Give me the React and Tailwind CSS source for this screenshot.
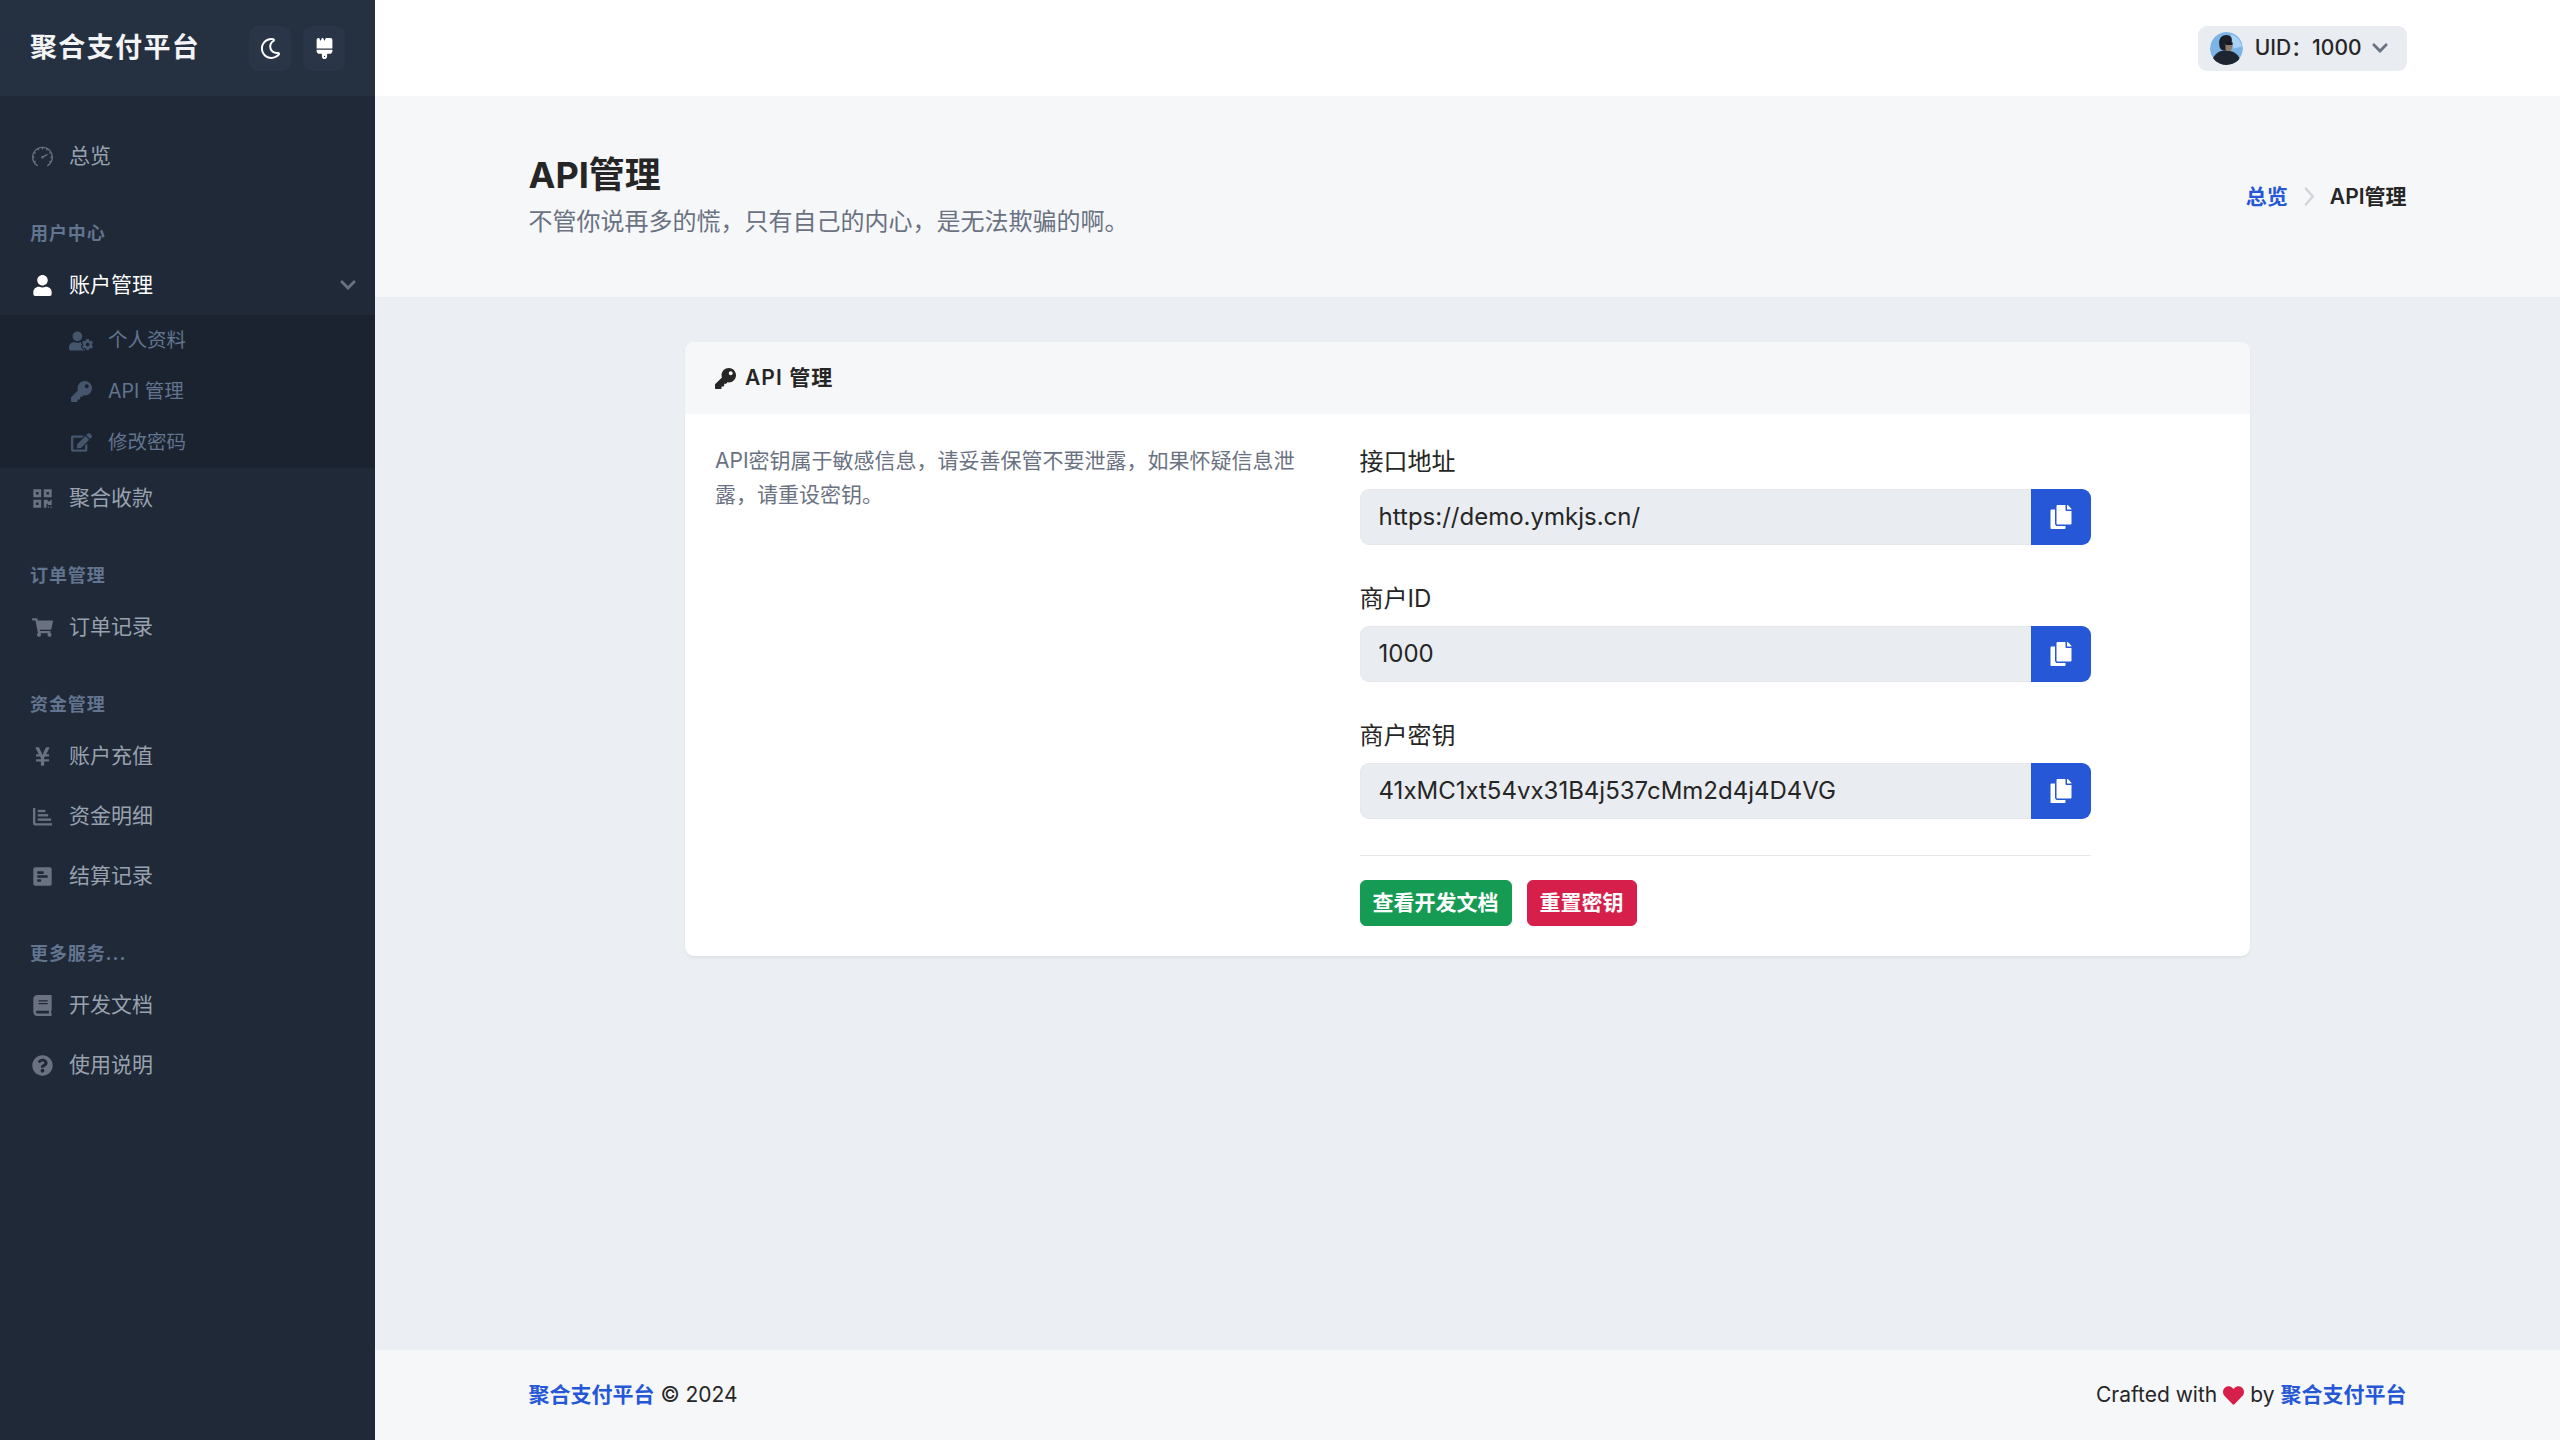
import React from "react";
import {
  FaRegMoon,
  FaUser,
  FaUserCog,
  FaKey,
  FaEdit,
  FaQrcode,
  FaShoppingCart,
  FaYenSign,
  FaPollH,
  FaBook,
  FaQuestionCircle,
  FaCopy,
  FaHeart,
  FaChevronDown,
} from "react-icons/fa";
import { FaBrush } from "react-icons/fa6";
import { SlSpeedometer } from "react-icons/sl";

function BarsIcon() {
  return (
    <svg viewBox="0 0 22 20" width="1em" height="1em" fill="currentColor">
      <path d="M1 1h2.5v15c0 .6.4 1 1 1H21v2.5H3.5A2.5 2.5 0 0 1 1 17z" />
      <rect x="6" y="3" width="8" height="2.5" />
      <rect x="6" y="7.5" width="11" height="2.5" />
      <rect x="6" y="12" width="14" height="2.5" />
    </svg>
  );
}

const navGroups = [
  {
    title: "用户中心",
    items: [
      {
        label: "账户管理",
        icon: FaUser,
        open: true,
        children: [
          { label: "个人资料", icon: FaUserCog, size: "text-base" },
          { label: "API 管理", icon: FaKey, size: "text-sm" },
          { label: "修改密码", icon: FaEdit, size: "text-sm" },
        ],
      },
      { label: "聚合收款", icon: FaQrcode },
    ],
  },
  { title: "订单管理", items: [{ label: "订单记录", icon: FaShoppingCart }] },
  {
    title: "资金管理",
    items: [
      { label: "账户充值", icon: FaYenSign },
      { label: "资金明细", icon: BarsIcon },
      { label: "结算记录", icon: FaPollH },
    ],
  },
  {
    title: "更多服务...",
    items: [
      { label: "开发文档", icon: FaBook },
      { label: "使用说明", icon: FaQuestionCircle },
    ],
  },
];

const fields = [
  { label: "接口地址", value: "https://demo.ymkjs.cn/" },
  { label: "商户ID", value: "1000" },
  { label: "商户密钥", value: "41xMC1xt54vx31B4j537cMm2d4j4D4VG" },
];

function NavItem({ item }) {
  const Icon = item.icon;
  return (
    <li>
      <div className={`flex items-center gap-2.5 h-10 pl-5 pr-3 text-sm ${item.open ? "text-white" : "text-gray-400"}`}>
        <span className={`w-4 flex justify-center text-sm ${item.open ? "text-white" : "text-gray-500"}`}>
          <Icon />
        </span>
        <span className="flex-1">{item.label}</span>
        {item.children && <FaChevronDown className="text-xs text-gray-500" />}
      </div>
      {item.children && (
        <ul className="bg-[#1b2330]">
          {item.children.map((child) => {
            const ChildIcon = child.icon;
            return (
              <li key={child.label} className="flex items-center gap-2.5 h-8.5 pl-11.5 text-[13px] text-slate-500">
                <span className={`w-4 flex justify-center text-slate-600 ${child.size}`}>
                  <ChildIcon />
                </span>
                {child.label}
              </li>
            );
          })}
        </ul>
      )}
    </li>
  );
}

function Sidebar() {
  return (
    <aside className="w-[250px] shrink-0 h-full bg-[#1f2937]">
      <div className="h-16 flex items-center justify-between px-5 bg-[#253041]">
        <span className="text-lg font-bold tracking-wider text-gray-100">聚合支付平台</span>
        <div className="flex gap-2">
          <button className="w-7 h-7.5 flex items-center justify-center rounded-md bg-[#2a3547] text-sm text-white">
            <FaRegMoon />
          </button>
          <button className="w-7 h-7.5 flex items-center justify-center rounded-md bg-[#2a3547] text-sm text-white">
            <FaBrush />
          </button>
        </div>
      </div>
      <nav className="pt-5">
        <div className="flex items-center gap-2.5 h-10 px-5 text-sm text-gray-400">
          <span className="w-4 flex justify-center text-sm text-gray-500">
            <SlSpeedometer />
          </span>
          总览
        </div>
        {navGroups.map((group) => (
          <div key={group.title}>
            <div className="pt-6 pb-1.5 px-5 text-xs font-bold tracking-wider text-slate-500">{group.title}</div>
            <ul>
              {group.items.map((item) => (
                <NavItem key={item.label} item={item} />
              ))}
            </ul>
          </div>
        ))}
      </nav>
    </aside>
  );
}

function Topbar() {
  return (
    <header className="h-16 shrink-0 bg-white">
      <div className="max-w-7xl h-full mx-auto px-3.5 flex items-center justify-end">
        <button className="h-7.5 flex items-center gap-2 pl-2 pr-3 rounded-md bg-[#e9ecf1] text-sm font-medium text-neutral-800">
          <svg viewBox="0 0 32 32" className="w-5.5 h-5.5 rounded-full">
            <circle cx="16" cy="16" r="16" fill="#7db4e6" />
            <path d="M20 2c6 2 10 7 11 12l-8 2z" fill="#a9d2f3" />
            <path d="M2 28c2-7 7-10 13-10s12 2 14 9c-3 3-8 5-13 5S5 31 2 28z" fill="#1e2530" />
            <path d="M9 12c-1-6 3-9 7-9s6 3 5 7l-2 8h-6c-3-1-4-3-4-6z" fill="#1a1f28" />
            <path d="M15 11h7l-1 6c-2 2-5 2-6 0z" fill="#8f7a6c" />
            <rect x="15" y="10" width="7" height="2.5" rx="1" fill="#14181f" />
          </svg>
          <span>UID：1000</span>
          <FaChevronDown className="text-xs text-gray-500 -ml-0.5" />
        </button>
      </div>
    </header>
  );
}

function Hero() {
  return (
    <section className="shrink-0 bg-[#f6f7f9]">
      <div className="max-w-7xl mx-auto px-3.5 py-9.5 flex items-center justify-between">
        <div>
          <h1 className="text-2xl leading-7.5 font-bold text-neutral-800">API管理</h1>
          <p className="mt-1 text-base text-gray-500">不管你说再多的慌，只有自己的内心，是无法欺骗的啊。</p>
        </div>
        <div className="flex items-center gap-2.5 text-sm font-semibold">
          <a className="text-[#2557d6]">总览</a>
          <svg viewBox="0 0 12 22" className="w-2 h-3.5" fill="none" stroke="#d1d5db" strokeWidth="2.5">
            <polyline points="2,2 10,11 2,20" />
          </svg>
          <span className="text-neutral-800">API管理</span>
        </div>
      </div>
    </section>
  );
}

function ApiCard() {
  return (
    <div className="w-5/6 mx-auto rounded-md bg-white shadow-xs overflow-hidden">
      <div className="h-12 flex items-center gap-1.5 px-5 bg-[#f6f7f9] text-sm font-semibold tracking-wider text-neutral-800">
        <FaKey className="text-sm" />
        API 管理
      </div>
      <div className="grid grid-cols-12 gap-x-7 px-5 pt-5 pb-5">
        <p className="col-span-5 text-sm leading-relaxed text-gray-500">
          API密钥属于敏感信息，请妥善保管不要泄露，如果怀疑信息泄露，请重设密钥。
        </p>
        <div className="col-span-6">
          {fields.map((field) => (
            <div key={field.label} className="mb-6">
              <label className="block mb-1.5 text-base text-neutral-800">{field.label}</label>
              <div className="flex">
                <input
                  readOnly
                  value={field.value}
                  className="flex-1 min-w-0 px-3 py-1.5 rounded-l-md border border-r-0 border-gray-200 bg-[#e9ecf0] text-base leading-6 text-neutral-800 outline-none"
                />
                <button className="w-10 flex items-center justify-center rounded-r-md bg-[#2557d6] text-base text-white">
                  <FaCopy />
                </button>
              </div>
            </div>
          ))}
          <hr className="mb-4 border-gray-200" />
          <div className="flex gap-2.5">
            <button className="px-2 py-1 rounded border border-[#169b55] bg-[#169b55] text-sm leading-normal font-bold text-white">
              查看开发文档
            </button>
            <button className="px-2 py-1 rounded border border-[#d61f4a] bg-[#d61f4a] text-sm leading-normal font-bold text-white">
              重置密钥
            </button>
          </div>
        </div>
      </div>
    </div>
  );
}

function Footer() {
  return (
    <footer className="shrink-0 bg-[#f6f7f9]">
      <div className="max-w-7xl mx-auto px-3.5 py-5 flex items-center justify-between text-sm leading-5 text-neutral-800">
        <div>
          <a className="font-semibold text-[#2557d6]">聚合支付平台</a> © 2024
        </div>
        <div className="flex items-center gap-1">
          Crafted with <FaHeart className="text-[#d61f4a]" /> by
          <a className="font-semibold text-[#2557d6]">聚合支付平台</a>
        </div>
      </div>
    </footer>
  );
}

export default function App() {
  return (
    <div className="h-screen overflow-hidden">
      {/* the whole page is drawn at 150% browser zoom */}
      <div className="[zoom:1.5] h-full flex bg-[#ebeef2] font-[Inter,'Noto_Sans_CJK_SC',sans-serif]">
        <Sidebar />
        <main className="flex-1 min-w-0 h-full flex flex-col">
          <Topbar />
          <Hero />
          <div className="flex-1">
            <div className="max-w-7xl mx-auto px-3.5 pt-7.5">
              <ApiCard />
            </div>
          </div>
          <Footer />
        </main>
      </div>
    </div>
  );
}
